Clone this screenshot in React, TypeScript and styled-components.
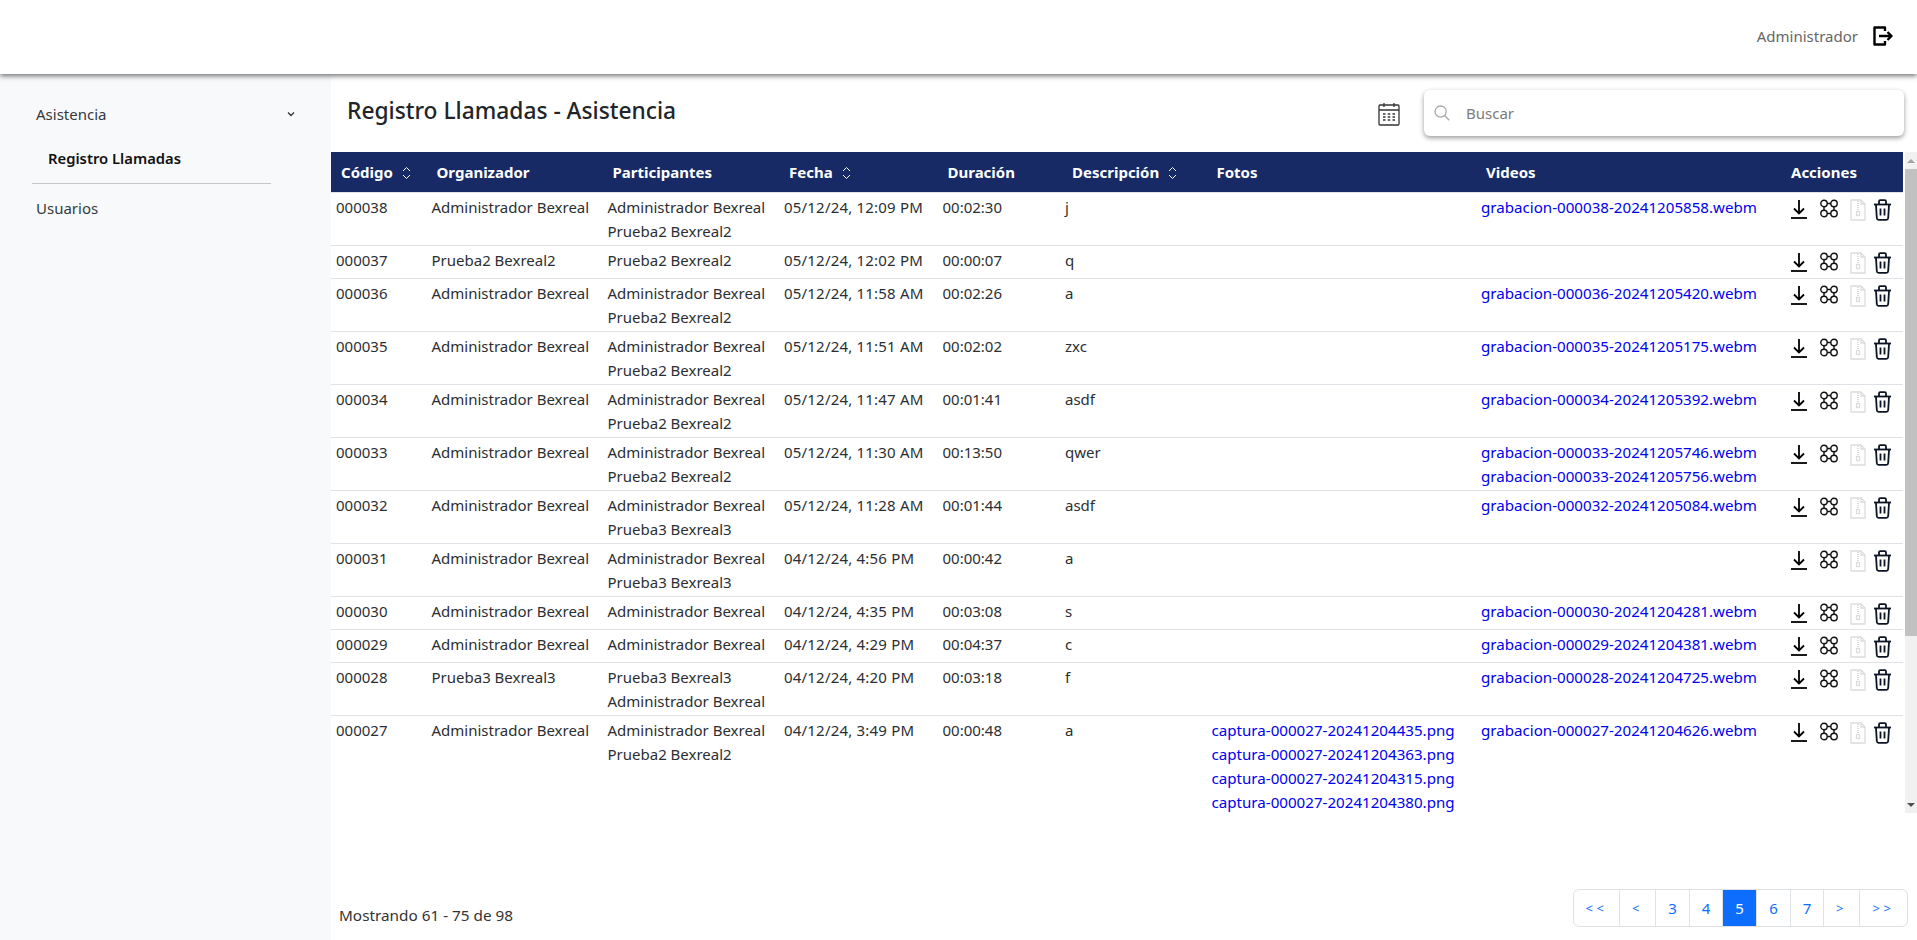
import React from "react";
import styled, { createGlobalStyle } from "styled-components";

const Global = createGlobalStyle`
  html, body { margin: 0; padding: 0; height: 100%; overflow: hidden; }
  body { font-family: "Noto Sans", "Open Sans", Arial, sans-serif; font-size: 15px; color: #212529; background: #fff; }
  * { box-sizing: border-box; }
`;

const Page = styled.div`
  width: 1917px;
  height: 940px;
  display: flex;
  flex-direction: column;
  overflow: hidden;
`;
const TopBar = styled.header`
  height: 74px;
  flex: none;
  display: flex;
  align-items: center;
  justify-content: flex-end;
  gap: 15px;
  padding: 0 24px 2px 0;
  background: #fff;
  box-shadow: 0 2px 5px rgba(0, 0, 0, 0.55);
  position: relative;
  z-index: 2;
`;
const UserName = styled.span`
  color: #666;
  font-size: 15px;
`;
const Body = styled.div`
  flex: 1;
  display: flex;
  min-height: 0;
`;
const Sidebar = styled.nav`
  width: 331px;
  flex: none;
  background: #f8f9fb;
  padding: 26px 0 0 32px;
`;
const MenuRow = styled.div`
  width: 263px;
  display: flex;
  justify-content: space-between;
  align-items: center;
  padding: 0 0 0 4px;
  height: 28px;
  color: #343a40;
  font-size: 15px;
`;
const SubItem = styled.div`
  height: 44px;
  padding: 0 0 0 16px;
  display: flex;
  align-items: center;
  font-weight: 600;
  font-size: 14.8px;
  color: #111;
  margin-top: 8px;
`;
const Divider = styled.hr`
  width: 239px;
  margin: 3px 0 10px;
  border: 0;
  border-top: 1px solid #c4c6c9;
`;
const Main = styled.main`
  flex: 1;
  min-width: 0;
  display: flex;
  flex-direction: column;
`;
const TitleRow = styled.div`
  height: 78px;
  flex: none;
  display: flex;
  padding: 16px 13px 0 16px;
`;
const Title = styled.h1`
  margin: 0;
  font-size: 22.75px;
  font-weight: 500;
  line-height: 41px;
  color: #212529;
  flex: 1;
`;
const CalendarWrap = styled.div`
  width: 24px;
  height: 24px;
  margin: 12px 22px 0 1px;
`;
const SearchBox = styled.div`
  width: 480px;
  height: 46px;
  display: flex;
  align-items: center;
  gap: 16px;
  padding: 0 0 1px 10px;
  border-radius: 6px;
  background: #fff;
  box-shadow: 0 2px 5px rgba(0, 0, 0, 0.4);
`;
const SearchText = styled.span`
  color: #7b7b7b;
  font-size: 15px;
`;
const TableArea = styled.div`
  height: 661px;
  flex: none;
  display: flex;
  gap: 2px;
`;
const TableClip = styled.div`
  width: 1572px;
  flex: none;
  overflow: hidden;
`;
const ScrollTrack = styled.div`
  width: 12px;
  flex: none;
  display: flex;
  flex-direction: column;
  justify-content: flex-start;
  background: #f1f1f1;
`;
const ScrollEnd = styled.div<{ $dir: "up" | "down" }>`
  height: 17px;
  flex: none;
  display: flex;
  align-items: center;
  justify-content: center;
  margin-top: ${(p) => (p.$dir === "down" ? "auto" : "0")};
  &::before {
    content: "";
    border-left: 4px solid transparent;
    border-right: 4px solid transparent;
    border-${(p) => (p.$dir === "up" ? "bottom" : "top")}: 4px solid ${(p) => (p.$dir === "up" ? "#a3a3a3" : "#505050")};
  }
`;
const ScrollThumb = styled.div`
  height: 467px;
  flex: none;
  background: #c1c1c1;
`;
const Table = styled.table`
  width: 1572px;
  table-layout: fixed;
  border-collapse: separate;
  border-spacing: 0;
`;
const Th = styled.th<{ $pad?: number }>`
  height: 41px;
  padding: 0 0 0 ${(p) => p.$pad ?? 10}px;
  background: #172a66;
  color: #fff;
  font-size: 15px;
  font-weight: 700;
  text-align: left;
  white-space: nowrap;
  border-bottom: 1px solid #dee2e6;
`;
const SortMark = styled.svg`
  margin-left: 9px;
  vertical-align: -2px;
`;
const Td = styled.td<{ $size?: number; $track?: number }>`
  padding: 2px 5px;
  vertical-align: top;
  line-height: 24px;
  font-size: ${(p) => p.$size ?? 15}px;
  letter-spacing: ${(p) => p.$track ?? 0}px;
  color: #2b2f33;
  border-bottom: 1px solid #dee2e6;
  white-space: nowrap;
`;
const Line = styled.div``;
const FileLink = styled.a`
  display: block;
  color: #0000ee;
  text-decoration: none;
`;
const Actions = styled.div`
  height: 28px;
  display: flex;
  align-items: flex-start;
  padding: 4px 0 0 1px;
`;
const ActionSlot = styled.span<{ $w: number }>`
  width: ${(p) => p.$w}px;
  flex: none;
  display: flex;
`;
const Footer = styled.div`
  flex: 1;
  display: flex;
  justify-content: space-between;
  padding: 76px 9px 0 8px;
`;
const Showing = styled.span`
  color: #333;
  font-size: 15.3px;
  line-height: 24px;
  margin-top: 14px;
`;
const Pager = styled.ul`
  margin: 0;
  padding: 0;
  list-style: none;
  display: flex;
  height: 38px;
  border: 1px solid #dee2e6;
  border-radius: 6px;
`;
const PageItem = styled.li<{ $w: number; $active?: boolean; $sym?: boolean }>`
  width: ${(p) => p.$w}px;
  display: flex;
  align-items: center;
  justify-content: center;
  color: ${(p) => (p.$active ? "#fff" : "#0d6efd")};
  background: ${(p) => (p.$active ? "#0d6efd" : "transparent")};
  font-size: ${(p) => (p.$sym ? "13px" : "15px")};
  letter-spacing: ${(p) => (p.$sym ? "3.5px" : "0")};
  border-right: 1px solid #dee2e6;
  &:last-child { border-right: 0; }
`;

const Chevron = () => (
  <svg width="8" height="6" viewBox="0 0 8 6" fill="none" stroke="#333" strokeWidth="1.3"><path d="M1 1.5l3 3 3-3" /></svg>
);
const Sort = () => (
  <SortMark width="9" height="14" viewBox="0 0 9 14" fill="none" stroke="#fff" strokeWidth="1"><path d="M1 5l3.5-3.5L8 5M1 9l3.5 3.5L8 9" /></SortMark>
);
const Logout = () => (
  <svg width="20" height="20" viewBox="0 0 20 20" fill="none" stroke="#000" strokeWidth="2.4" strokeLinejoin="round"><path d="M12 5V1.5H1.5v17H12V15" /><path d="M6 10h12.5M14.5 6l4 4-4 4" /></svg>
);
const Calendar = () => (
  <svg width="22" height="24" viewBox="0 0 22 24" fill="none" stroke="#333" strokeWidth="1.3"><rect x="1" y="3" width="20" height="20" rx="1" /><path d="M1 8h20M6 1v4M16 1v4" /><path d="M5 12h2.5M9.7 12h2.5M14.5 12h2.5M5 15h2.5M9.7 15h2.5M14.5 15h2.5M5 18h2.5M9.7 18h2.5M14.5 18h2.5" strokeWidth="1.5" /></svg>
);
const SearchIcon = () => (
  <svg width="16" height="16" viewBox="0 0 16 16" fill="none" stroke="#a8a8a8" strokeWidth="1.3"><circle cx="6.6" cy="6.6" r="5.6" /><path d="M10.8 10.8l4.4 4.4" /></svg>
);
const DownloadIcon = () => (
  <svg width="16" height="22" viewBox="0 0 16 22" fill="none" stroke="#000" strokeWidth="1.8"><path d="M8 1v13M3 9.5l5 5 5-5" /><path d="M0 19h16" /></svg>
);
const ClusterIcon = () => (
  <svg width="18" height="19" viewBox="0 0 18 19" fill="none" stroke="#111" strokeWidth="1.4"><circle cx="4" cy="4.5" r="3.2" /><circle cx="14" cy="4.5" r="3.2" /><circle cx="4" cy="14.5" r="3.2" /><circle cx="14" cy="14.5" r="3.2" /><path d="M7.2 4.5h3.6M7.2 14.5h3.6M4 7.7v3.6M14 7.7v3.6" /></svg>
);
const ZipIcon = () => (
  <svg width="16" height="22" viewBox="0 0 16 22" fill="none" stroke="#dcdcdc" strokeWidth="1.3"><path d="M1 1h10l4 4v16H1z" /><path d="M11 1v4h4" /><path d="M7 2.5h2M7 4.5h2M7 6.5h2M7 8.5h2M7 10.5h2" strokeWidth="1" /><rect x="6.5" y="12.5" width="3" height="4" /></svg>
);
const TrashIcon = () => (
  <svg width="19" height="22" viewBox="0 0 19 22" fill="none" stroke="#0c1424" strokeWidth="1.8" strokeLinejoin="round"><path d="M1 5.5h17" /><path d="M6 5V2.5C6 1.8 6.5 1.2 7.2 1.2h4.6c.7 0 1.2.6 1.2 1.3V5" /><path d="M3 6l.8 13c.1 1 .8 1.8 1.8 1.8h7.8c1 0 1.7-.8 1.8-1.8L16 6" /><path d="M7.5 9.5v7M11.5 9.5v7" /></svg>
);

type Row = { c: string; o: string; p: string[]; f: string; d: string; t: string; photos?: string[]; videos?: string[] };
const A = "Administrador Bexreal";
const P2 = "Prueba2 Bexreal2";
const P3 = "Prueba3 Bexreal3";
const rows: Row[] = [
  { c: "000038", o: A, p: [A, P2], f: "05/12/24, 12:09 PM", d: "00:02:30", t: "j", videos: ["grabacion-000038-20241205858.webm"] },
  { c: "000037", o: P2, p: [P2], f: "05/12/24, 12:02 PM", d: "00:00:07", t: "q" },
  { c: "000036", o: A, p: [A, P2], f: "05/12/24, 11:58 AM", d: "00:02:26", t: "a", videos: ["grabacion-000036-20241205420.webm"] },
  { c: "000035", o: A, p: [A, P2], f: "05/12/24, 11:51 AM", d: "00:02:02", t: "zxc", videos: ["grabacion-000035-20241205175.webm"] },
  { c: "000034", o: A, p: [A, P2], f: "05/12/24, 11:47 AM", d: "00:01:41", t: "asdf", videos: ["grabacion-000034-20241205392.webm"] },
  { c: "000033", o: A, p: [A, P2], f: "05/12/24, 11:30 AM", d: "00:13:50", t: "qwer", videos: ["grabacion-000033-20241205746.webm", "grabacion-000033-20241205756.webm"] },
  { c: "000032", o: A, p: [A, P3], f: "05/12/24, 11:28 AM", d: "00:01:44", t: "asdf", videos: ["grabacion-000032-20241205084.webm"] },
  { c: "000031", o: A, p: [A, P3], f: "04/12/24, 4:56 PM", d: "00:00:42", t: "a" },
  { c: "000030", o: A, p: [A], f: "04/12/24, 4:35 PM", d: "00:03:08", t: "s", videos: ["grabacion-000030-20241204281.webm"] },
  { c: "000029", o: A, p: [A], f: "04/12/24, 4:29 PM", d: "00:04:37", t: "c", videos: ["grabacion-000029-20241204381.webm"] },
  { c: "000028", o: P3, p: [P3, A], f: "04/12/24, 4:20 PM", d: "00:03:18", t: "f", videos: ["grabacion-000028-20241204725.webm"] },
  { c: "000027", o: A, p: [A, P2], f: "04/12/24, 3:49 PM", d: "00:00:48", t: "a",
    photos: ["captura-000027-20241204435.png", "captura-000027-20241204363.png", "captura-000027-20241204315.png", "captura-000027-20241204380.png"],
    videos: ["grabacion-000027-20241204626.webm"] },
];
const cols: [string, number, boolean, number?][] = [
  ["Código", 95.5, true], ["Organizador", 176, false], ["Participantes", 176.5, false], ["Fecha", 158.5, true],
  ["Duración", 122.5, false], ["Descripción", 146.5, true, 12], ["Fotos", 269.5, false], ["Videos", 309, false], ["Acciones", 118, false, 6],
];
const pages: [string, number, boolean?, boolean?][] = [
  ["<<", 46, false, true], ["<", 36, false, true], ["3", 34], ["4", 33], ["5", 34, true], ["6", 34], ["7", 33], [">", 36, false, true], [">>", 47, false, true],
];

export default function App() {
  return (
    <Page>
      <Global />
      <TopBar>
        <UserName>Administrador</UserName>
        <Logout />
      </TopBar>
      <Body>
        <Sidebar>
          <MenuRow>Asistencia <Chevron /></MenuRow>
          <SubItem>Registro Llamadas</SubItem>
          <Divider />
          <MenuRow>Usuarios</MenuRow>
        </Sidebar>
        <Main>
          <TitleRow>
            <Title>Registro Llamadas - Asistencia</Title>
            <CalendarWrap><Calendar /></CalendarWrap>
            <SearchBox><SearchIcon /><SearchText>Buscar</SearchText></SearchBox>
          </TitleRow>
          <TableArea>
            <TableClip>
              <Table>
                <colgroup>{cols.map(([n, w]) => <col key={n} width={w} />)}</colgroup>
                <thead>
                  <tr>{cols.map(([n, , s, pad]) => <Th key={n} $pad={pad}>{n}{s && <Sort />}</Th>)}</tr>
                </thead>
                <tbody>
                  {rows.map((r) => (
                    <tr key={r.c}>
                      <Td>{r.c}</Td>
                      <Td>{r.o}</Td>
                      <Td>{r.p.map((x) => <Line key={x}>{x}</Line>)}</Td>
                      <Td $track={0.2}>{r.f}</Td>
                      <Td>{r.d}</Td>
                      <Td>{r.t}</Td>
                      <Td $size={15.13}>{r.photos?.map((x) => <FileLink key={x}>{x}</FileLink>)}</Td>
                      <Td $size={15.13}>{r.videos?.map((x) => <FileLink key={x}>{x}</FileLink>)}</Td>
                      <Td>
                        <Actions>
                          <ActionSlot $w={29}><DownloadIcon /></ActionSlot>
                          <ActionSlot $w={30}><ClusterIcon /></ActionSlot>
                          <ActionSlot $w={23}><ZipIcon /></ActionSlot>
                          <ActionSlot $w={19}><TrashIcon /></ActionSlot>
                        </Actions>
                      </Td>
                    </tr>
                  ))}
                </tbody>
              </Table>
            </TableClip>
            <ScrollTrack>
              <ScrollEnd $dir="up" />
              <ScrollThumb />
              <ScrollEnd $dir="down" />
            </ScrollTrack>
          </TableArea>
          <Footer>
            <Showing>Mostrando 61 - 75 de 98</Showing>
            <Pager>
              {pages.map(([l, w, a, s]) => <PageItem key={l} $w={w} $active={a} $sym={s}>{l}</PageItem>)}
            </Pager>
          </Footer>
        </Main>
      </Body>
    </Page>
  );
}
